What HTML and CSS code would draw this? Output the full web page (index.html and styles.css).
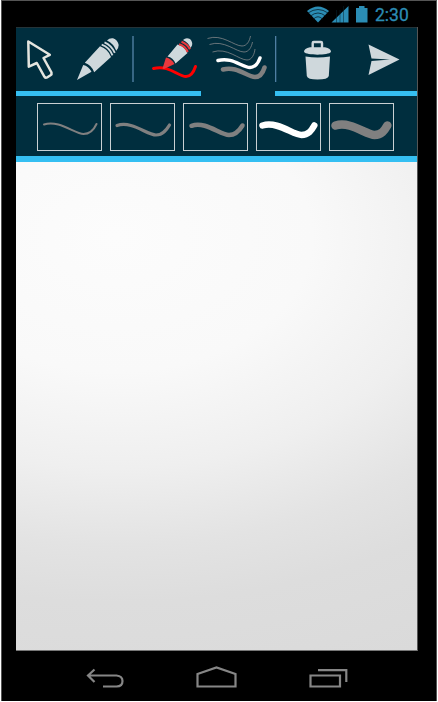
FILE: index.html
```html
<!DOCTYPE html>
<html lang="en">
<head>
<meta charset="utf-8">
<title>Drawing</title>
<link rel="stylesheet" href="styles.css">
</head>
<body>
<div class="phone">
  <header class="status">
    <svg class="status-icons" viewBox="306 5 64 20" width="64" height="20">
      <path class="wifi" d="M307 11Q318 2 329 11L318 22.500Z"/>
      <path class="wifi-gap" d="M308 13Q318 6 328 13M310.500 16Q318 10 325.500 16M313.500 19Q318 14.500 322.500 19"/>
      <path class="signal" d="M331.500 22.500L348.500 6V22.500Z"/>
      <path class="signal-gap" d="M336.500 10V23M340 10V23M343.500 6V23"/>
      <path class="battery" d="M356 8H359V6H364.500V8H367.500V22.500H356Z"/>
    </svg>
    <span class="time">2:30</span>
  </header>
  <main class="screen">
    <nav class="tools">
      <button class="tool select" aria-label="Select"><svg viewBox="16 27 50 64" width="50" height="64">
        <path class="arrow" d="M28.300 41.500L49.800 54.800L43.500 58L51.500 72.500Q52 74.300 50.500 75.300L47 77.500Q45.500 78.300 44.500 76.800L36.800 63L28.800 66.700Z"/>
      </svg></button>
      <button class="tool pencil" aria-label="Pencil"><svg viewBox="66 27 68 64" width="68" height="64">
        <path class="fill" d="M77 80L83.200 65Q88.500 66 91.500 71.800ZM84.800 62.800L100 46.300Q108 49 111 57L94.200 72.300Q91.500 65 84.800 62.800ZM107 40.500Q109.500 37.800 113 38.300Q117.800 40 118.700 45Q118.700 48 116.300 50.800Q113.500 43.500 107 40.500Z"/>
        <path class="band" d="M101.700 44.700Q109.300 47.300 112.500 55.300M104.500 42.300Q111.500 45.300 114.800 52.800"/>
        <path class="divider" d="M133 36V82"/>
      </svg></button>
      <button class="tool color" aria-label="Color"><svg viewBox="134 27 67 64" width="67" height="64">
        <path class="red-line" d="M153.500 68.500C169 64.500 178 76.500 186 76.500C191 76.500 194 71 195.500 66.500"/>
        <path class="fill" d="M167.500 56.500L177.500 44.500Q185 46.500 187.500 53L175.500 63.500Q173 57.500 167.500 56.500ZM183 40Q186 37 190 39Q193 42 192 45.500L190.500 48Q188.500 42.500 183 40Z"/>
        <path class="red" d="M162.500 68.500L166 57.500Q171.500 58.500 174.500 64L164 69Z"/>
        <path class="red-band" d="M179 44.300Q185.300 46 187.700 52M181.500 41.700Q187.500 44 190 49.300"/>
      </svg></button>
      <button class="tool size active" aria-label="Stroke size"><svg viewBox="201 27 74 64" width="74" height="64">
        <path class="thin" d="M207.500 38.500C222 33.500 234 46 242 46C247 46 249.500 41 250.500 36M209.500 44.500C224 39.500 236 52 244 52C249 52 251.500 47 252.500 42M212.500 52C227 47 239 60 247 60C252 60 254.500 54 255 49"/>
        <path class="gray-line" d="M223 69.500C237 65.500 247 77 255 77C260 77 263 72.500 264.500 67.500"/>
        <path class="white-line" d="M218 60.500C232 56.500 242 67.500 250 67.500C255 67.500 258.500 62.500 260 58"/>
      </svg></button>
      <button class="tool trash" aria-label="Delete"><svg viewBox="275 27 72 64" width="72" height="64">
        <path class="divider" d="M275.600 36V82"/>
        <path class="trash-handle" d="M312.700 48V43Q312.700 42 313.700 42H321Q322 42 322 43V48"/>
        <path class="fill" d="M310 47.200H325C329 48 331 49.500 331 52C328.500 55.500 306.500 55.500 304 52C304 49.500 306 48 310 47.200ZM305.500 56.500Q317.500 58.500 330 56.500L328.800 76Q328 79.500 317.500 79.500Q307.500 79.500 306.800 76Z"/>
      </svg></button>
      <button class="tool send" aria-label="Send"><svg viewBox="347 27 70 64" width="70" height="64">
        <path class="fill" d="M368.500 44.500L399.500 59.500L368.500 75L371.500 61L390 59.500L371.500 58.500Z"/>
      </svg></button>
    </nav>
    <div class="sizes">
      <button class="stroke" aria-label="Size 1"><svg viewBox="0 0 63 46" width="63" height="46"><path stroke-width="2" d="M6 20.500C21 15.500 37 30 45.500 30C52.500 30 56 25.500 58.500 20"/></svg></button>
      <button class="stroke" aria-label="Size 2"><svg viewBox="0 0 63 46" width="63" height="46"><path stroke-width="3.200" d="M6 21.500C21 16.500 36 31 45 31C52 31 55.500 26 58.500 21"/></svg></button>
      <button class="stroke" aria-label="Size 3"><svg viewBox="0 0 63 46" width="63" height="46"><path stroke-width="4.500" d="M7.500 21.800C22 17 36 31 45 31C52 31 55.500 26.500 58.500 21.500"/></svg></button>
      <button class="stroke chosen" aria-label="Size 4"><svg viewBox="0 0 63 46" width="63" height="46"><path stroke-width="6.500" d="M5.500 21.500C21 17 36 31 44.500 31C51.500 31 54.500 26.500 57.300 21.500"/></svg></button>
      <button class="stroke" aria-label="Size 5"><svg viewBox="0 0 63 46" width="63" height="46"><path stroke-width="8.500" d="M5.500 21.500C21 17 36 31 44.500 31C51.500 31 54.500 26.500 57.300 21.500"/></svg></button>
    </div>
    <div class="canvas"></div>
  </main>
  <footer class="system">
    <svg viewBox="86 667 39 22" width="39" height="22"><path d="M94.500 669.500L88 675.500L94.500 682M88.500 675.500H116.500Q122.500 676 122.500 681Q122.500 686.500 116.500 686.500H103"/></svg>
    <svg viewBox="195 665 43 24" width="43" height="24"><path d="M197.500 686.500V674L216.500 667.500L235.500 674V686.500Z"/></svg>
    <svg viewBox="309 667 40 22" width="40" height="22"><path d="M311.500 675.500H341V686.500H311.500ZM319 670.200H347.300V682"/></svg>
  </footer>
</div>
</body>
</html>
```
FILE: styles.css
```css
* { box-sizing: border-box; }
body { margin: 0; background: #fff; }
.phone {
  width: 436px;
  height: 701px;
  margin-left: 1px;
  padding: 0 18px 0 14px;
  background: #000;
  border: solid #555;
  border-width: 1px 1px 0;
}
svg { display: block; fill: none; }
button { padding: 0; border: 0; background: none; display: block; }
.status { height: 26px; display: flex; justify-content: flex-end; align-items: center; padding: 1px 8px 0 0; }
.status-icons { margin-right: 5px; }
.time { width: 35px; font: 17.500px/20px Roboto, sans-serif; color: #2b8db5; white-space: nowrap; -webkit-text-stroke: 0.3px #2b8db5; }
.wifi, .signal, .battery { fill: #2b8db5; }
.wifi-gap, .signal-gap { stroke: #07222e; stroke-width: 0.800; }
.signal-gap { stroke-width: 0.500; }
.screen { width: 402px; height: 624px; display: flex; flex-direction: column; border-right: 1px solid #555; border-bottom: 1px solid #777; }
.tools { display: flex; height: 69px; background: #002e3e; box-shadow: inset 0 1px #253338; }
.tool { height: 69px; border-bottom: 5px solid #35bff2; }
.tool.active { border-bottom-color: transparent; }
.fill { fill: #cfd8dc; }
.arrow { stroke: #e4e5df; stroke-width: 2.500; stroke-linejoin: round; }
.band { stroke: #cfd8dc; stroke-width: 1.800; }
.divider { stroke: #4f7fa3; stroke-width: 1.400; }
.red { fill: #e8383d; }
.red-band { stroke: #e8383d; stroke-width: 2.200; }
.red-line { stroke: #f00; stroke-width: 3; stroke-linecap: round; }
.thin { stroke: #818588; stroke-width: 0.800; }
.white-line { stroke: #fff; stroke-width: 3.500; stroke-linecap: round; }
.gray-line { stroke: #808080; stroke-width: 4.500; stroke-linecap: round; }
.trash-handle { stroke: #cfd8dc; stroke-width: 2.400; }
.sizes { height: 66px; padding: 7px 0 0 21px; display: flex; gap: 8px; background: #002e3e; border-bottom: 6px solid #35bff2; }
.stroke { width: 65px; height: 48px; border: 1px solid #c9d0d3; stroke: #808080; stroke-linecap: round; }
.stroke.chosen { stroke: #fff; }
.canvas { flex: 1; background: radial-gradient(ellipse 560px 385px at 100px 75px, #fcfcfc, #f9f9f9 35%, #efefef 60%, #e3e3e3 80%, #dddddd 95%, #dadada 120%); }
.system { height: 38px; padding-left: 70px; display: flex; align-items: flex-end; gap: 70px; stroke: #868686; stroke-width: 2.200; }
```
